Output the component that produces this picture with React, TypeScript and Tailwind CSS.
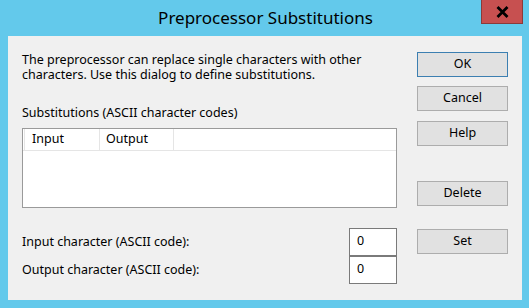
import React from "react";

const font = { fontFamily: '"Noto Sans", "Open Sans", sans-serif' };

function Btn({ label, def, className }: { label: string; def?: boolean; className?: string }) {
  return (
    <div
      className={
        "w-[91px] h-[25px] flex items-center justify-center bg-[#e1e1e1] text-[12.5px] text-black border " +
        (def ? "border-[#3c7fb1] " : "border-[#adadad] ") +
        (className ?? "")
      }
    >
      {label}
    </div>
  );
}

export default function App() {
  return (
    <div className="w-[529px] h-[308px] bg-[#63c9eb] relative overflow-hidden" style={font}>
      <div className="h-[36px] flex items-center justify-center pb-[1px] pl-[2px]">
        <span className="text-[17px] text-black leading-[20px]">Preprocessor Substitutions</span>
      </div>
      <div className="absolute top-0 right-[6px] w-[42px] h-[24px] bg-[#c75050] border border-t-0 border-[#8b3a3a] flex items-center justify-center">
        <svg width="13" height="12" viewBox="0 0 13 12">
          <path d="M1.5 1 L11.5 11 M11.5 1 L1.5 11" stroke="#000" strokeWidth="2.8" />
        </svg>
      </div>
      <div className="ml-[8px] mr-[7px] h-[264px] bg-[#f0f0f0] flex pl-[14px]">
        <div className="w-[375px] flex flex-col">
          <div className="mt-[16px] text-[12.5px] leading-[15px] text-black">
            The preprocessor can replace single characters with other
            <br />
            characters. Use this dialog to define substitutions.
          </div>
          <div className="mt-[23px] text-[12.5px] leading-[15px] text-black">
            Substitutions (ASCII character codes)
          </div>
          <div className="mt-[8px] h-[80px] bg-white border border-[#9a9a9a] flex flex-col">
            <div className="h-[22px] flex border-b border-[#e5e5e5] text-[12.5px] text-black">
              <div className="w-[76px] ml-[1px] border-r border-l border-[#e5e5e5] flex items-center pl-[7px]">Input</div>
              <div className="w-[74px] border-r border-[#e5e5e5] flex items-center pl-[6px]">Output</div>
            </div>
          </div>
          <div className="mt-[20px] flex flex-col">
            <div className="h-[28px] flex items-center justify-between">
              <span className="text-[12.5px] text-black">Input character (ASCII code):</span>
              <div className="w-[48px] h-[28px] bg-white border border-[#7a7a7a] text-[12.5px] text-black pl-[7px] pt-[3px]">0</div>
            </div>
            <div className="h-[28px] flex items-center justify-between">
              <span className="text-[12.5px] text-black">Output character (ASCII code):</span>
              <div className="w-[48px] h-[28px] bg-white border border-[#7a7a7a] text-[12.5px] text-black pl-[7px] pt-[3px]">0</div>
            </div>
          </div>
        </div>
        <div className="ml-[20px] flex flex-col">
          <Btn label="OK" def className="mt-[16px]" />
          <Btn label="Cancel" className="mt-[9px]" />
          <Btn label="Help" className="mt-[10px]" />
          <Btn label="Delete" className="mt-[35px]" />
          <Btn label="Set" className="mt-[23px]" />
        </div>
      </div>
    </div>
  );
}
